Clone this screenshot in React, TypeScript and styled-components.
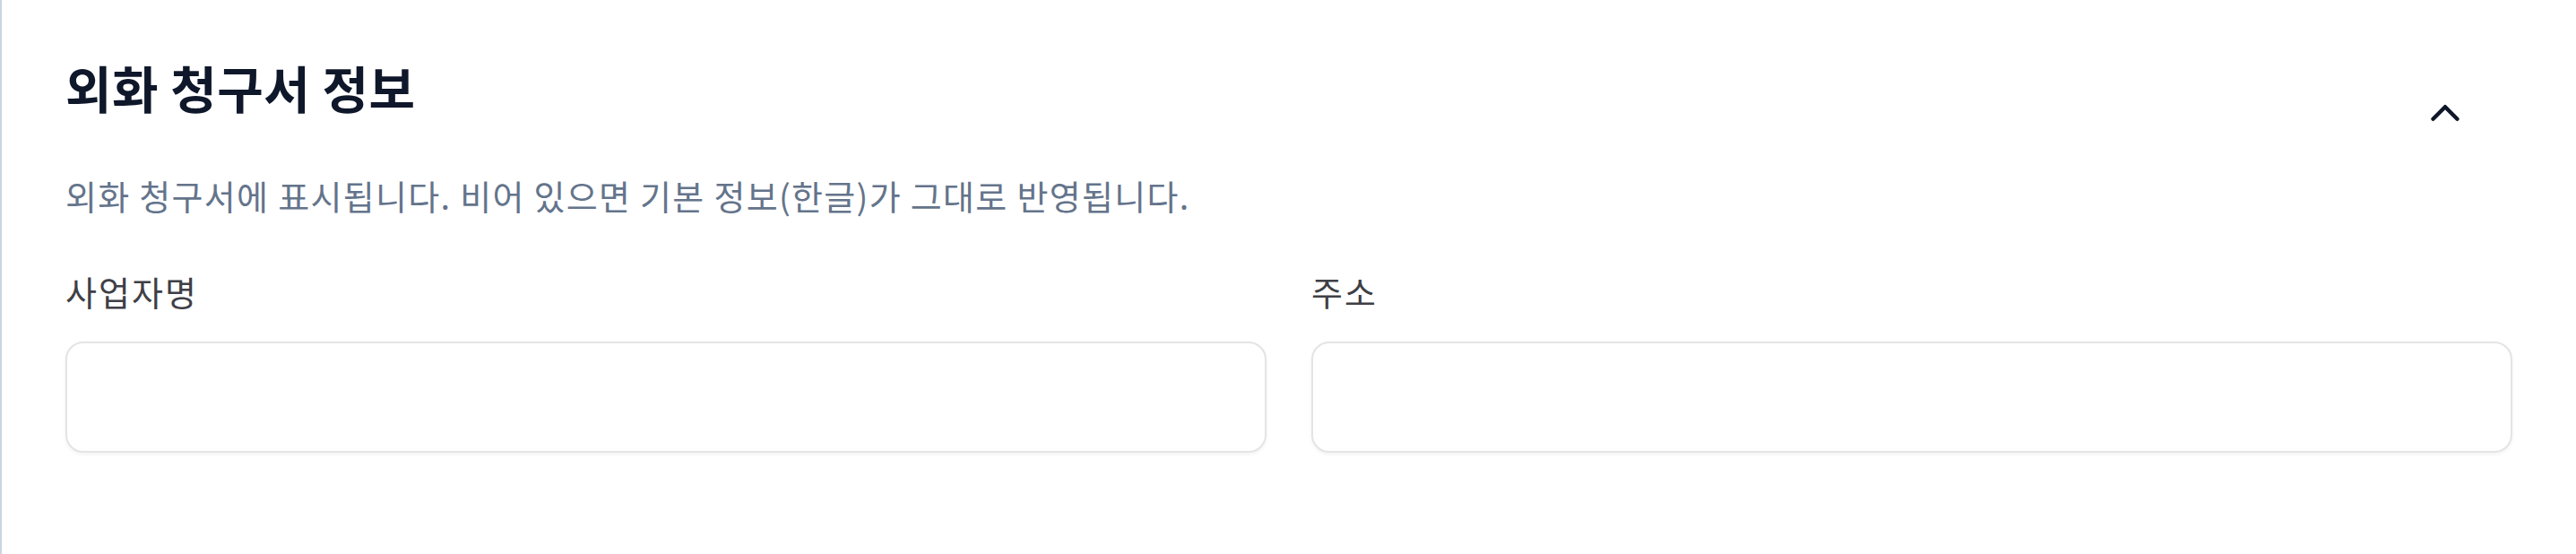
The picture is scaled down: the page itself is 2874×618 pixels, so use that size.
import React from 'react';
import styled, { createGlobalStyle } from 'styled-components';
import { ChevronUp } from 'lucide-react';

const GlobalStyle = createGlobalStyle`
  html, body {
    margin: 0;
    padding: 0;
    background: #ffffff;
  }

  body {
    font-family: 'Noto Sans CJK KR', 'Noto Sans', sans-serif;
  }
`;

const Section = styled.section`
  box-sizing: border-box;
  min-height: 618px;
  padding: 58px 71px 0 71px;
  border-left: 2px solid #cbd5e1;
  background: #ffffff;
`;

const Header = styled.div`
  display: flex;
  justify-content: space-between;
  align-items: flex-start;
`;

const HeaderText = styled.div`
  display: flex;
  flex-direction: column;
`;

const Title = styled.h2`
  margin: 0;
  font-size: 56px;
  font-weight: 700;
  line-height: 1.4;
  letter-spacing: 0.5px;
  color: #0f172a;
`;

const Description = styled.p`
  margin: 53px 0 0 0;
  font-size: 38px;
  font-weight: 400;
  line-height: 1.5;
  letter-spacing: 1.3px;
  color: #64748b;
`;

const ToggleButton = styled.button`
  display: flex;
  align-items: center;
  justify-content: center;
  margin-top: 41px;
  padding: 0 48px 0 0;
  border: none;
  background: transparent;
  color: #0f172a;
  cursor: pointer;
`;

const Fields = styled.div`
  display: grid;
  grid-template-columns: 1fr 1fr;
  gap: 50px;
  margin-top: 50px;
`;

const Field = styled.label`
  display: flex;
  flex-direction: column;
  gap: 28px;
`;

const FieldLabel = styled.span`
  font-size: 38px;
  line-height: 1.5;
  letter-spacing: 2px;
  color: #3f3f46;
`;

const Input = styled.input`
  box-sizing: border-box;
  width: 100%;
  height: 124px;
  padding: 0 32px;
  border: 2px solid #e4e4e7;
  border-radius: 20px;
  background: #ffffff;
  box-shadow: 0 2px 4px rgba(0, 0, 0, 0.05);
  font-family: inherit;
  font-size: 36px;
  color: #0f172a;
  outline: none;
`;

const fields = [
  { id: 'company', label: '사업자명' },
  { id: 'address', label: '주소' },
];

export default function App() {
  return (
    <>
      <GlobalStyle />
      <Section>
        <Header>
          <HeaderText>
            <Title>외화 청구서 정보</Title>
            <Description>
              외화 청구서에 표시됩니다. 비어 있으면 기본 정보(한글)가 그대로 반영됩니다.
            </Description>
          </HeaderText>
          <ToggleButton type="button" aria-label="접기">
            <ChevronUp size={54} strokeWidth={2} />
          </ToggleButton>
        </Header>
        <Fields>
          {fields.map((f) => (
            <Field key={f.id}>
              <FieldLabel>{f.label}</FieldLabel>
              <Input type="text" />
            </Field>
          ))}
        </Fields>
      </Section>
    </>
  );
}
